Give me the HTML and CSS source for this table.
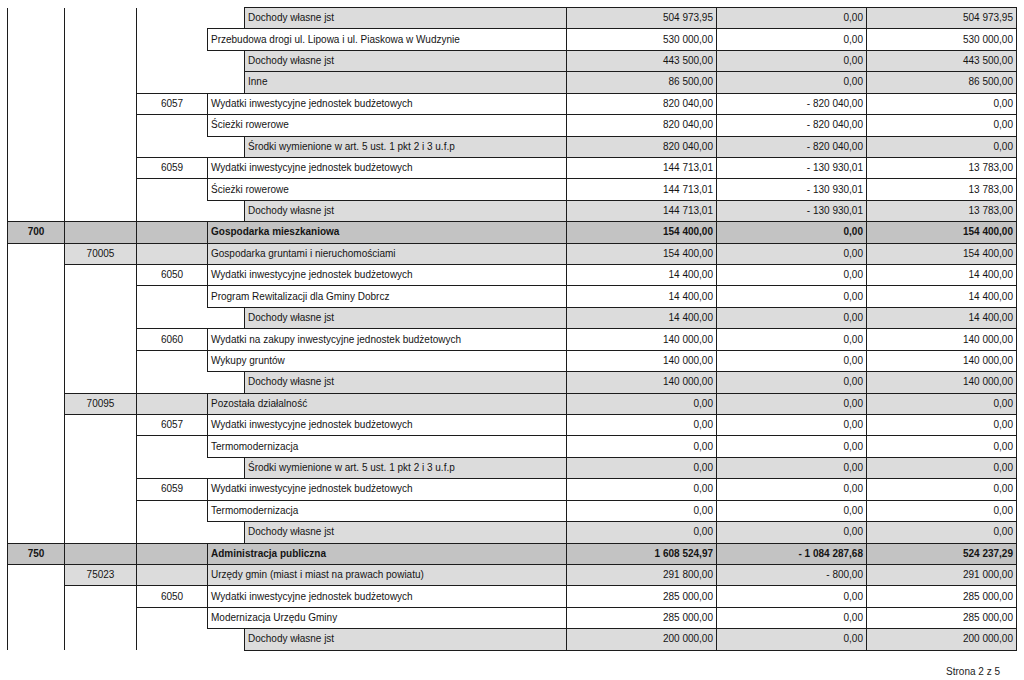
FILE: index.html
```html
<!DOCTYPE html>
<html lang="pl">
<head>
<meta charset="utf-8">
<title>Strona 2 z 5</title>
<link rel="stylesheet" href="styles.css">
</head>
<body>
<table class="plan">
  <colgroup>
    <col class="w-dz"><col class="w-roz"><col class="w-par"><col class="w-ind"><col class="w-desc"><col class="w-amt"><col class="w-amt"><col class="w-amt">
  </colgroup>
  <tbody>
    <tr class="src">
      <td rowspan="10" class="plain cont"></td>
      <td rowspan="10" class="plain cont"></td>
      <td rowspan="4" class="gap cont"></td>
      <td class="blank"></td>
      <td class="desc">Dochody własne jst</td>
      <td class="amt">504 973,95</td><td class="amt">0,00</td><td class="amt">504 973,95</td>
    </tr>
    <tr class="task">
      <td colspan="2" class="desc">Przebudowa drogi ul. Lipowa i ul. Piaskowa w Wudzynie</td>
      <td class="amt">530 000,00</td><td class="amt">0,00</td><td class="amt">530 000,00</td>
    </tr>
    <tr class="src">
      <td class="blank"></td>
      <td class="desc">Dochody własne jst</td>
      <td class="amt">443 500,00</td><td class="amt">0,00</td><td class="amt">443 500,00</td>
    </tr>
    <tr class="src">
      <td class="blank"></td>
      <td class="desc">Inne</td>
      <td class="amt">86 500,00</td><td class="amt">0,00</td><td class="amt">86 500,00</td>
    </tr>
    <tr class="par">
      <td class="code">6057</td>
      <td colspan="2" class="desc">Wydatki inwestycyjne jednostek budżetowych</td>
      <td class="amt">820 040,00</td><td class="amt">- 820 040,00</td><td class="amt">0,00</td>
    </tr>
    <tr class="task">
      <td rowspan="2" class="gap"></td>
      <td colspan="2" class="desc">Ścieżki rowerowe</td>
      <td class="amt">820 040,00</td><td class="amt">- 820 040,00</td><td class="amt">0,00</td>
    </tr>
    <tr class="src">
      <td class="blank"></td>
      <td class="desc">Środki wymienione w art. 5 ust. 1 pkt 2 i 3 u.f.p</td>
      <td class="amt">820 040,00</td><td class="amt">- 820 040,00</td><td class="amt">0,00</td>
    </tr>
    <tr class="par">
      <td class="code">6059</td>
      <td colspan="2" class="desc">Wydatki inwestycyjne jednostek budżetowych</td>
      <td class="amt">144 713,01</td><td class="amt">- 130 930,01</td><td class="amt">13 783,00</td>
    </tr>
    <tr class="task">
      <td rowspan="2" class="gap"></td>
      <td colspan="2" class="desc">Ścieżki rowerowe</td>
      <td class="amt">144 713,01</td><td class="amt">- 130 930,01</td><td class="amt">13 783,00</td>
    </tr>
    <tr class="src">
      <td class="blank"></td>
      <td class="desc">Dochody własne jst</td>
      <td class="amt">144 713,01</td><td class="amt">- 130 930,01</td><td class="amt">13 783,00</td>
    </tr>

    <tr class="dz">
      <td class="code">700</td>
      <td></td>
      <td></td>
      <td colspan="2" class="desc">Gospodarka mieszkaniowa</td>
      <td class="amt">154 400,00</td><td class="amt">0,00</td><td class="amt">154 400,00</td>
    </tr>
    <tr class="roz">
      <td rowspan="14" class="plain"></td>
      <td class="code">70005</td>
      <td></td>
      <td colspan="2" class="desc">Gospodarka gruntami i nieruchomościami</td>
      <td class="amt">154 400,00</td><td class="amt">0,00</td><td class="amt">154 400,00</td>
    </tr>
    <tr class="par">
      <td rowspan="6" class="plain"></td>
      <td class="code">6050</td>
      <td colspan="2" class="desc">Wydatki inwestycyjne jednostek budżetowych</td>
      <td class="amt">14 400,00</td><td class="amt">0,00</td><td class="amt">14 400,00</td>
    </tr>
    <tr class="task">
      <td rowspan="2" class="gap"></td>
      <td colspan="2" class="desc">Program Rewitalizacji dla Gminy Dobrcz</td>
      <td class="amt">14 400,00</td><td class="amt">0,00</td><td class="amt">14 400,00</td>
    </tr>
    <tr class="src">
      <td class="blank"></td>
      <td class="desc">Dochody własne jst</td>
      <td class="amt">14 400,00</td><td class="amt">0,00</td><td class="amt">14 400,00</td>
    </tr>
    <tr class="par">
      <td class="code">6060</td>
      <td colspan="2" class="desc">Wydatki na zakupy inwestycyjne jednostek budżetowych</td>
      <td class="amt">140 000,00</td><td class="amt">0,00</td><td class="amt">140 000,00</td>
    </tr>
    <tr class="task">
      <td rowspan="2" class="gap"></td>
      <td colspan="2" class="desc">Wykupy gruntów</td>
      <td class="amt">140 000,00</td><td class="amt">0,00</td><td class="amt">140 000,00</td>
    </tr>
    <tr class="src">
      <td class="blank"></td>
      <td class="desc">Dochody własne jst</td>
      <td class="amt">140 000,00</td><td class="amt">0,00</td><td class="amt">140 000,00</td>
    </tr>
    <tr class="roz">
      <td class="code">70095</td>
      <td></td>
      <td colspan="2" class="desc">Pozostała działalność</td>
      <td class="amt">0,00</td><td class="amt">0,00</td><td class="amt">0,00</td>
    </tr>
    <tr class="par">
      <td rowspan="6" class="plain"></td>
      <td class="code">6057</td>
      <td colspan="2" class="desc">Wydatki inwestycyjne jednostek budżetowych</td>
      <td class="amt">0,00</td><td class="amt">0,00</td><td class="amt">0,00</td>
    </tr>
    <tr class="task">
      <td rowspan="2" class="gap"></td>
      <td colspan="2" class="desc">Termomodernizacja</td>
      <td class="amt">0,00</td><td class="amt">0,00</td><td class="amt">0,00</td>
    </tr>
    <tr class="src">
      <td class="blank"></td>
      <td class="desc">Środki wymienione w art. 5 ust. 1 pkt 2 i 3 u.f.p</td>
      <td class="amt">0,00</td><td class="amt">0,00</td><td class="amt">0,00</td>
    </tr>
    <tr class="par">
      <td class="code">6059</td>
      <td colspan="2" class="desc">Wydatki inwestycyjne jednostek budżetowych</td>
      <td class="amt">0,00</td><td class="amt">0,00</td><td class="amt">0,00</td>
    </tr>
    <tr class="task">
      <td rowspan="2" class="gap"></td>
      <td colspan="2" class="desc">Termomodernizacja</td>
      <td class="amt">0,00</td><td class="amt">0,00</td><td class="amt">0,00</td>
    </tr>
    <tr class="src">
      <td class="blank"></td>
      <td class="desc">Dochody własne jst</td>
      <td class="amt">0,00</td><td class="amt">0,00</td><td class="amt">0,00</td>
    </tr>

    <tr class="dz">
      <td class="code">750</td>
      <td></td>
      <td></td>
      <td colspan="2" class="desc">Administracja publiczna</td>
      <td class="amt">1 608 524,97</td><td class="amt">- 1 084 287,68</td><td class="amt">524 237,29</td>
    </tr>
    <tr class="roz">
      <td rowspan="4" class="plain open"></td>
      <td class="code">75023</td>
      <td></td>
      <td colspan="2" class="desc">Urzędy gmin (miast i miast na prawach powiatu)</td>
      <td class="amt">291 800,00</td><td class="amt">- 800,00</td><td class="amt">291 000,00</td>
    </tr>
    <tr class="par">
      <td rowspan="3" class="plain open"></td>
      <td class="code">6050</td>
      <td colspan="2" class="desc">Wydatki inwestycyjne jednostek budżetowych</td>
      <td class="amt">285 000,00</td><td class="amt">0,00</td><td class="amt">285 000,00</td>
    </tr>
    <tr class="task">
      <td rowspan="2" class="gap open"></td>
      <td colspan="2" class="desc">Modernizacja Urzędu Gminy</td>
      <td class="amt">285 000,00</td><td class="amt">0,00</td><td class="amt">285 000,00</td>
    </tr>
    <tr class="src">
      <td class="blank"></td>
      <td class="desc">Dochody własne jst</td>
      <td class="amt">200 000,00</td><td class="amt">0,00</td><td class="amt">200 000,00</td>
    </tr>
  </tbody>
</table>
<div class="footer">Strona 2 z 5</div>
</body>
</html>
```

FILE: styles.css
```css
html, body {
  margin: 0;
  padding: 0;
  background: #ffffff;
}

body {
  font-family: "Liberation Sans", Arial, sans-serif;
  font-size: 10px;
  color: #141414;
  padding: 7px 0 0 7px;
}

.plan {
  border-collapse: collapse;
  table-layout: fixed;
  width: 1009px;
}

.w-dz { width: 57px; }
.w-roz { width: 72px; }
.w-par { width: 71px; }
.w-ind { width: 37px; }
.w-desc { width: 322px; }
.w-amt { width: 150px; }

.plan tr {
  height: 21.43px;
}

.plan td {
  border: 1px solid #1c1c1c;
  padding: 0 3px;
  vertical-align: middle;
  white-space: nowrap;
  overflow: hidden;
  line-height: 12px;
}

.plan td.cont {
  border-top: none;
}

.plan td.gap {
  border-right: none;
  background: #ffffff;
}

.plan td.blank {
  border: none;
  background: #ffffff;
}

.plan td.plain {
  background: #ffffff;
}

.plan td.open {
  border-bottom: none;
}

.code {
  text-align: center;
}

.desc {
  text-align: left;
}

.amt {
  text-align: right;
}

.src td {
  background: #dcdcdc;
}

.roz td {
  background: #dcdcdc;
}

.dz td {
  background: #c3c3c3;
  font-weight: bold;
}

.task td,
.par td {
  background: #ffffff;
}

.footer {
  width: 1009px;
  box-sizing: border-box;
  text-align: right;
  padding-right: 16px;
  margin-top: 15px;
  font-size: 10px;
  color: #222;
}
```
